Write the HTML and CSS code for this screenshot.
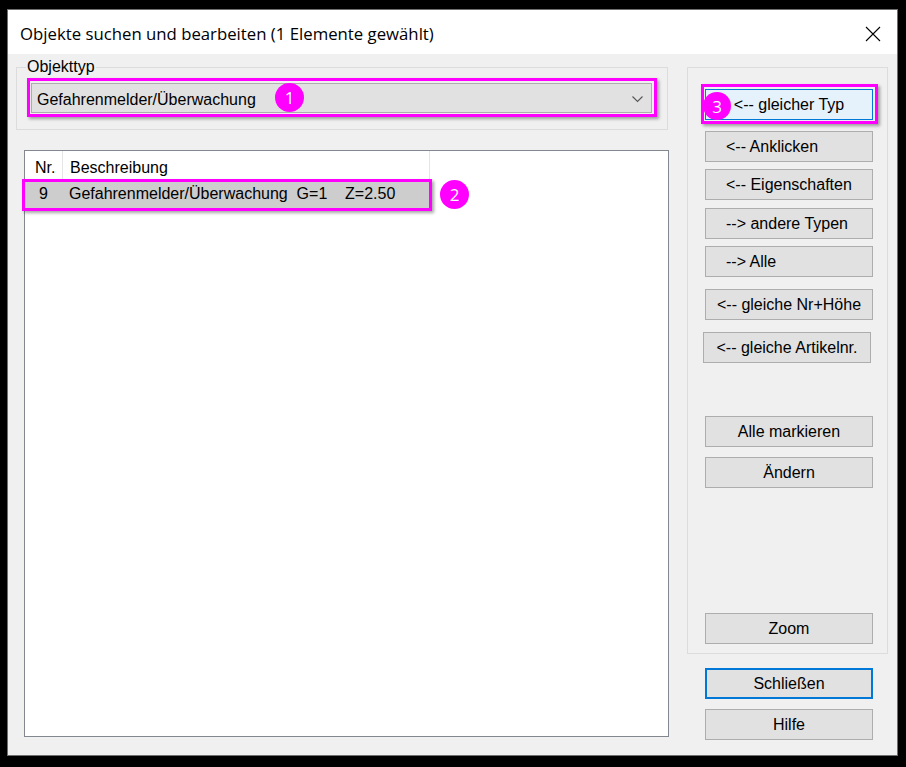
FILE: index.html
```html
<!DOCTYPE html>
<html lang="de">
<head>
    <meta charset="UTF-8">
    <meta name="viewport" content="width=device-width, initial-scale=1.0">
    <title>Objekte suchen und bearbeiten</title>
    <link rel="stylesheet" href="styles.css">
</head>
<body>
    <div class="dialog">
        <div class="titlebar">
            <span class="title">Objekte suchen und bearbeiten (1 Elemente gewählt)</span>
            <svg class="close" width="16" height="16" viewBox="0 0 16 16"><path d="M1 1L15 15M15 1L1 15" fill="none" stroke="#000" stroke-width="1.1"/></svg>
        </div>

        <div class="content">
            <div class="left">
                <fieldset class="group type-group">
                    <legend>Objekttyp</legend>
                    <div class="mark combo-mark">
                        <div class="combo">
                            <span>Gefahrenmelder/Überwachung</span>
                            <svg width="11" height="7" viewBox="0 0 11 7"><polyline points="0.5,0.5 5.5,5.5 10.5,0.5" fill="none" stroke="#555" stroke-width="1.1"/></svg>
                        </div>
                        <span class="badge badge-1">1</span>
                    </div>
                </fieldset>

                <div class="listbox">
                    <div class="list-head">
                        <div class="col nr">Nr.</div>
                        <div class="col desc">Beschreibung</div>
                    </div>
                    <div class="mark row-mark">
                        <div class="list-row">
                            <div class="col nr">9</div>
                            <div class="col desc">Gefahrenmelder/Überwachung  G=1    Z=2.50</div>
                        </div>
                        <span class="badge badge-2">2</span>
                    </div>
                </div>
            </div>

            <div class="right">
                <div class="group actions">
                    <div class="mark btn-mark">
                        <button class="btn hot">&lt;-- gleicher Typ</button>
                        <span class="badge badge-3">3</span>
                    </div>
                    <button class="btn lead">&lt;-- Anklicken</button>
                    <button class="btn lead">&lt;-- Eigenschaften</button>
                    <button class="btn lead nudge">--&gt; andere Typen</button>
                    <button class="btn lead">--&gt; Alle</button>
                    <button class="btn sep">&lt;-- gleiche Nr+Höhe</button>
                    <button class="btn sep shift">&lt;-- gleiche Artikelnr.</button>
                    <button class="btn section">Alle markieren</button>
                    <button class="btn next">Ändern</button>
                    <button class="btn bottom">Zoom</button>
                </div>
                <button class="btn default close-btn">Schließen</button>
                <button class="btn help-btn">Hilfe</button>
            </div>
        </div>
    </div>
</body>
</html>
```

FILE: styles.css
```css
* {
    box-sizing: border-box;
}

body {
    margin: 0;
    background: #000;
    font-family: "Liberation Sans", Arial, sans-serif;
    font-size: 16px;
    color: #000;
}

.dialog {
    margin: 9px 0 0 7px;
    width: 891px;
    height: 747px;
    border: 1px solid #6f6f6f;
    background: #f0f0f0;
    display: flex;
    flex-direction: column;
}

.titlebar {
    height: 44px;
    flex: none;
    background: #fff;
    display: flex;
    align-items: center;
    justify-content: space-between;
    padding: 3px 16px 0 12px;
}

.titlebar .title {
    font-family: "Open Sans", "Noto Sans", sans-serif;
    font-size: 16.75px;
    color: #000;
}

.content {
    flex: 1;
    display: flex;
    align-items: flex-start;
    padding: 4px 0 0 8px;
}

.left {
    width: 653px;
    display: flex;
    flex-direction: column;
}

.group {
    margin: 0;
    border: 1px solid #dcdcdc;
    min-width: 0;
}

/* Objekttyp */
.type-group {
    width: 652px;
    padding: 2px 10px 12px 10px;
}

.type-group legend {
    padding: 0 1px;
    margin-left: -1px;
    line-height: 18px;
}

.mark {
    position: relative;
    border: 3px solid #ff00ff;
    box-shadow: 2px 2px 3px rgba(0, 0, 0, .35);
}

.combo-mark {
    padding: 2px 2px 1px 1px;
}

.combo {
    height: 30px;
    border: 1px solid #adadad;
    background: #e1e1e1;
    display: flex;
    justify-content: space-between;
    align-items: center;
    padding: 3px 8px 0 5px;
    line-height: 26px;
}

.badge {
    position: absolute;
    width: 29px;
    height: 29px;
    border-radius: 50%;
    background: #ff00ff;
    color: #fff;
    font-family: "Open Sans", sans-serif;
    font-size: 17px;
    display: flex;
    align-items: center;
    justify-content: center;
}

.badge-1 {
    left: 245px;
    top: 2px;
}

.badge-2 {
    left: 415px;
    top: -2px;
}

.badge-3 {
    left: -1px;
    top: 5px;
    width: 28px;
    height: 28px;
}

/* Liste */
.listbox {
    margin: 20px 0 0 8px;
    width: 645px;
    height: 587px;
    background: #fff;
    border: 1px solid #828790;
}

.list-head {
    display: flex;
    height: 28px;
}

.list-head .col {
    padding-top: 7px;
    line-height: 20px;
    border-right: 1px solid #e5e5e5;
}

.col.nr {
    width: 38px;
}

.col.desc {
    width: 367px;
    white-space: pre;
}

.list-head .nr {
    padding-left: 10px;
}

.list-head .desc {
    padding-left: 7px;
}

.row-mark {
    margin-left: -3px;
    width: 410px;
    height: 32px;
    background: #cdcdcd;
}

.list-row {
    display: flex;
    line-height: 24px;
}

.list-row .nr {
    padding-left: 14px;
}

.list-row .desc {
    padding-left: 6px;
}

/* Buttons rechts */
.right {
    margin: 9px 0 0 18px;
    width: 201px;
    display: flex;
    flex-direction: column;
    align-items: flex-start;
}

.actions {
    width: 201px;
    height: 587px;
    padding: 16px 0 9px 17px;
    display: flex;
    flex-direction: column;
    align-items: flex-start;
}

.btn {
    width: 168px;
    height: 31px;
    flex: none;
    margin: 0;
    padding: 0;
    border: 1px solid #adadad;
    background: #e1e1e1;
    font-family: "Liberation Sans", Arial, sans-serif;
    font-size: 16px;
    color: #000;
    text-align: center;
}

.btn-mark {
    display: flex;
    margin-left: -4px;
    padding: 2px 2px 1px 1px;
}

.btn.hot {
    background: #e5f1fb;
    border-color: #0078d7;
}

.btn.default {
    border: 2px solid #0078d7;
}

.actions .btn {
    margin-top: 7px;
}

.btn.lead {
    text-align: left;
    padding-left: 20px;
}

.actions .btn.nudge {
    margin-top: 8px;
}

.actions .btn.sep {
    margin-top: 12px;
}

.actions .btn.shift {
    margin-left: -2px;
}

.actions .btn.section {
    margin-top: 53px;
}

.actions .btn.next {
    margin-top: 10px;
}

.actions .btn.bottom {
    margin-top: auto;
}

.btn-mark .btn {
    margin: 0;
}

.close-btn {
    margin: 14px 0 0 18px;
}

.help-btn {
    margin: 10px 0 0 18px;
}
```
